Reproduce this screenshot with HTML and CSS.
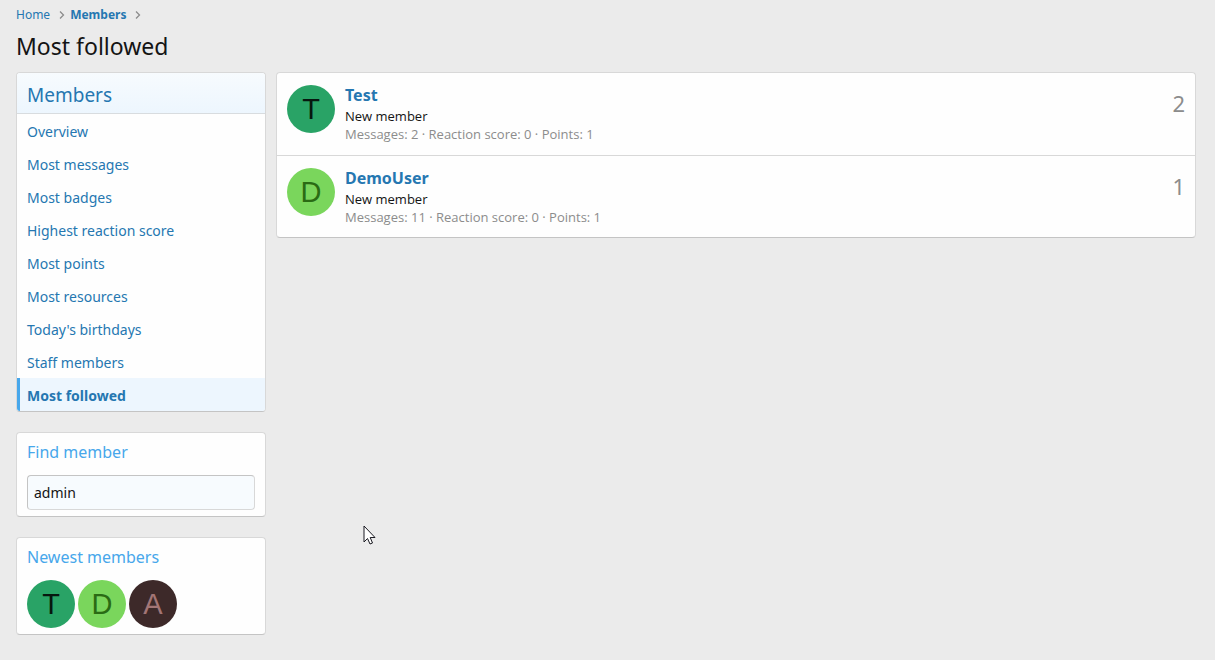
FILE: index.html
```
<!DOCTYPE html>
<html lang="en">

<head>
    <meta charset="UTF-8">
    <meta name="viewport" content="width=device-width, initial-scale=1.0">
    <title>Most followed</title>
    <link rel="stylesheet" href="styles.css">
</head>

<body>
    <nav class="breadcrumbs">
        <a href="#">Home</a>
        <svg class="chevron" viewBox="0 0 6 8"><path d="M1 0.5 L4.5 4 L1 7.5" /></svg>
        <a href="#" class="current">Members</a>
        <svg class="chevron" viewBox="0 0 6 8"><path d="M1 0.5 L4.5 4 L1 7.5" /></svg>
    </nav>
    <h1>Most followed</h1>

    <div class="container">
        <aside class="sidebar">
            <nav class="block">
                <h2 class="block-header"><a href="#">Members</a></h2>
                <ul class="nav-list">
                    <li><a href="#">Overview</a></li>
                    <li><a href="#">Most messages</a></li>
                    <li><a href="#">Most badges</a></li>
                    <li><a href="#">Highest reaction score</a></li>
                    <li><a href="#">Most points</a></li>
                    <li><a href="#">Most resources</a></li>
                    <li><a href="#">Today's birthdays</a></li>
                    <li><a href="#">Staff members</a></li>
                    <li><a href="#" class="selected">Most followed</a></li>
                </ul>
            </nav>

            <form class="block">
                <h3 class="minor-header"><label for="find-member">Find member</label></h3>
                <div class="block-row">
                    <input type="text" id="find-member" class="input" value="admin">
                </div>
            </form>

            <section class="block">
                <h3 class="minor-header">Newest members</h3>
                <div class="block-row avatar-list">
                    <a href="#" class="avatar avatar-t">T</a>
                    <a href="#" class="avatar avatar-d">D</a>
                    <a href="#" class="avatar avatar-a">A</a>
                </div>
            </section>
        </aside>

        <main class="main-content">
            <ol class="block member-list">
                <li class="member">
                    <a href="#" class="avatar avatar-t">T</a>
                    <div class="member-main">
                        <h3><a href="#">Test</a></h3>
                        <div class="member-title">New member</div>
                        <div class="member-stats">Messages: 2 · Reaction score: 0 · Points: 1</div>
                    </div>
                    <div class="member-count">2</div>
                </li>
                <li class="member">
                    <a href="#" class="avatar avatar-d">D</a>
                    <div class="member-main">
                        <h3><a href="#">DemoUser</a></h3>
                        <div class="member-title">New member</div>
                        <div class="member-stats">Messages: 11 · Reaction score: 0 · Points: 1</div>
                    </div>
                    <div class="member-count">1</div>
                </li>
            </ol>
        </main>
    </div>

    <svg class="cursor" viewBox="0 0 13 20">
        <path d="M1 1 V17 L4.5 13.5 L7 19 L9.5 18 L7.2 12.5 H12 Z" />
    </svg>
</body>

</html>
```
FILE: styles.css
```
* {
    box-sizing: border-box;
}

body {
    margin: 0;
    padding: 5px 19px 24px 16px;
    background-color: #ebebeb;
    color: #141414;
    font-family: "Noto Sans", sans-serif;
    font-size: 14px;
    line-height: 20px;
}

a {
    color: #2577b1;
    text-decoration: none;
}

h1,
h2,
h3,
ul,
ol {
    margin: 0;
    padding: 0;
    font-weight: 400;
    list-style: none;
}

h1 {
    margin: 5px 0 9px;
    font-size: 23px;
    line-height: 33px;
}

.breadcrumbs {
    display: flex;
    align-items: center;
    gap: 5px;
    font-size: 12px;
}

.breadcrumbs a {
    margin-right: 4px;
}

.breadcrumbs .current {
    font-weight: 700;
}

.chevron {
    width: 6px;
    height: 8px;
    fill: none;
    stroke: #8c8c8c;
    stroke-width: 1.3;
}

.container {
    display: flex;
    align-items: flex-start;
    gap: 10px;
}

.sidebar {
    flex: 0 0 250px;
    display: flex;
    flex-direction: column;
    gap: 20px;
}

.main-content {
    flex: 1;
}

.block {
    background-color: #fefefe;
    border: 1px solid #d8d8d8;
    border-bottom-color: #c4c4c4;
    border-radius: 4px;
    overflow: hidden;
}

.block-header {
    padding: 8px 10px 4px;
    border-bottom: 1px solid #d8dcdf;
    background: linear-gradient(#f7fbfe, #edf6fe);
    font-size: 19px;
    line-height: 28px;
}

.nav-list a {
    display: block;
    padding: 8px 10px 5px;
}

.nav-list .selected {
    padding-left: 7px;
    border-left: 3px solid #47a7eb;
    background-color: #edf6fe;
    font-weight: 700;
}

.minor-header {
    padding: 7px 10px 5px;
    color: #47a7eb;
    font-size: 16px;
    line-height: 24px;
}

.block-row {
    padding: 6px 10px;
}

.input {
    display: block;
    width: 100%;
    height: 35px;
    padding: 0 6px;
    border: 1px solid #d8d8d8;
    border-top-color: #c4c4c4;
    border-left-color: #c4c4c4;
    border-radius: 4px;
    background-color: #f7fbfe;
    color: #141414;
    font: inherit;
}

.avatar-list {
    display: flex;
    gap: 3px;
}

.avatar {
    flex: none;
    width: 48px;
    height: 48px;
    border-radius: 50%;
    font-family: "Liberation Sans", sans-serif;
    font-size: 29px;
    line-height: 48px;
    text-align: center;
}

.avatar-t {
    background-color: #29a366;
    color: #06170f;
}

.avatar-d {
    background-color: #7ad65c;
    color: #2a6b14;
}

.avatar-a {
    background-color: #3d2929;
    color: #a37575;
}

.member {
    display: flex;
    gap: 10px;
    padding: 12px 10px;
}

.member + .member {
    padding-bottom: 11px;
    border-top: 1px solid #d8d8d8;
}

.member-main {
    flex: 1;
    font-family: "Open Sans", sans-serif;
    font-size: 13px;
    line-height: 18px;
}

.member-main h3 {
    margin-bottom: 1px;
    font-family: "Noto Sans", sans-serif;
    font-size: 16px;
    line-height: 21px;
}

.member-main h3 a {
    font-weight: 700;
}

.member-stats {
    color: #8c8c8c;
}

.member-count {
    color: #8c8c8c;
    font-size: 22px;
    line-height: 36px;
}

/* mouse pointer over the page */
.cursor {
    position: absolute;
    left: 363px;
    top: 525px;
    width: 13px;
    height: 20px;
    fill: #fff;
    stroke: #1a1a22;
}
```
